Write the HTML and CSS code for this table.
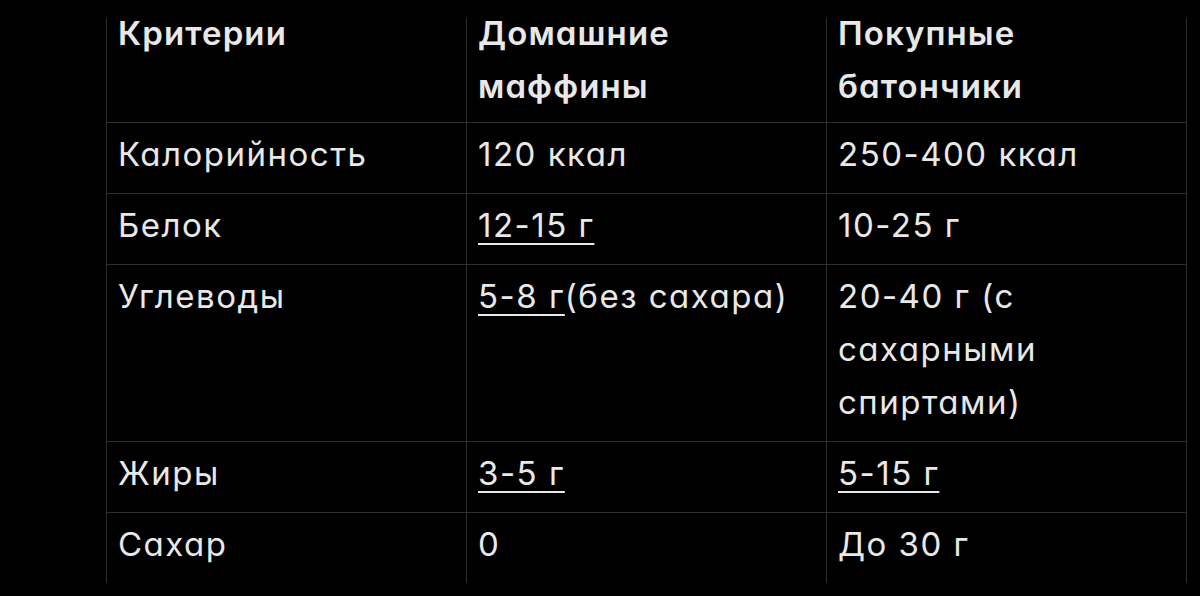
FILE: index.html
```html
<!DOCTYPE html>
<html lang="ru">
<head>
<meta charset="utf-8">
<title>Сравнение</title>
<link rel="stylesheet" href="styles.css">
</head>
<body>
<table class="cmp">
  <thead>
    <tr>
      <th>Критерии</th>
      <th>Домашние маффины</th>
      <th class="last">Покупные батончики</th>
    </tr>
  </thead>
  <tbody>
    <tr><td>Калорийность</td><td>120 ккал</td><td>250-400 ккал</td></tr>
    <tr><td>Белок</td><td><span class="u">12-15 г</span></td><td>10-25 г</td></tr>
    <tr><td>Углеводы</td><td><span class="u">5-8 г</span>(без сахара)</td><td>20-40 г (с сахарными спиртами)</td></tr>
    <tr><td>Жиры</td><td><span class="u">3-5 г</span></td><td><span class="u">5-15 г</span></td></tr>
    <tr class="end"><td>Сахар</td><td>0</td><td>До 30 г</td></tr>
  </tbody>
</table>
</body>
</html>
```

FILE: styles.css
```css
html, body {
  margin: 0;
  padding: 0;
  background: #000;
  height: 596px;
  overflow: hidden;
}
body {
  font-family: Inter, "Noto Sans", sans-serif;
  font-feature-settings: "cv11" 1;
  color: #e8e8e8;
  font-size: 33px;
  letter-spacing: 1.5px;
  line-height: 53px;
}
.cmp {
  margin: 2px 0 0 106px;
  border-collapse: separate;
  border-spacing: 0;
  table-layout: fixed;
  width: 1080px;
}
.cmp th, .cmp td {
  text-align: left;
  vertical-align: top;
  font-weight: 400;
  padding: 5px 12px 12px 11px;
}
.cmp th {
  font-weight: 600;
  letter-spacing: 1.1px;
  width: 336px;
  padding: 5px 12px 9px 12px;
  border-bottom: 1px solid #2f2f2f;
  background: linear-gradient(#2f2f2f, #2f2f2f) no-repeat left 16px / 1px 100%;
}
.cmp th.last {
  background:
    linear-gradient(#2f2f2f, #2f2f2f) no-repeat left 16px / 1px 100%,
    linear-gradient(#2f2f2f, #2f2f2f) no-repeat right 16px / 1px 100%;
  padding-right: 13px;
}
.cmp td {
  border-left: 1px solid #2f2f2f;
  border-bottom: 1px solid #2f2f2f;
}
.cmp td:last-child {
  border-right: 1px solid #2f2f2f;
}
.cmp tr.end td {
  border-bottom: none;
}
.u {
  text-decoration: underline;
  text-decoration-thickness: 2px;
  text-underline-offset: 6px;
}
```
